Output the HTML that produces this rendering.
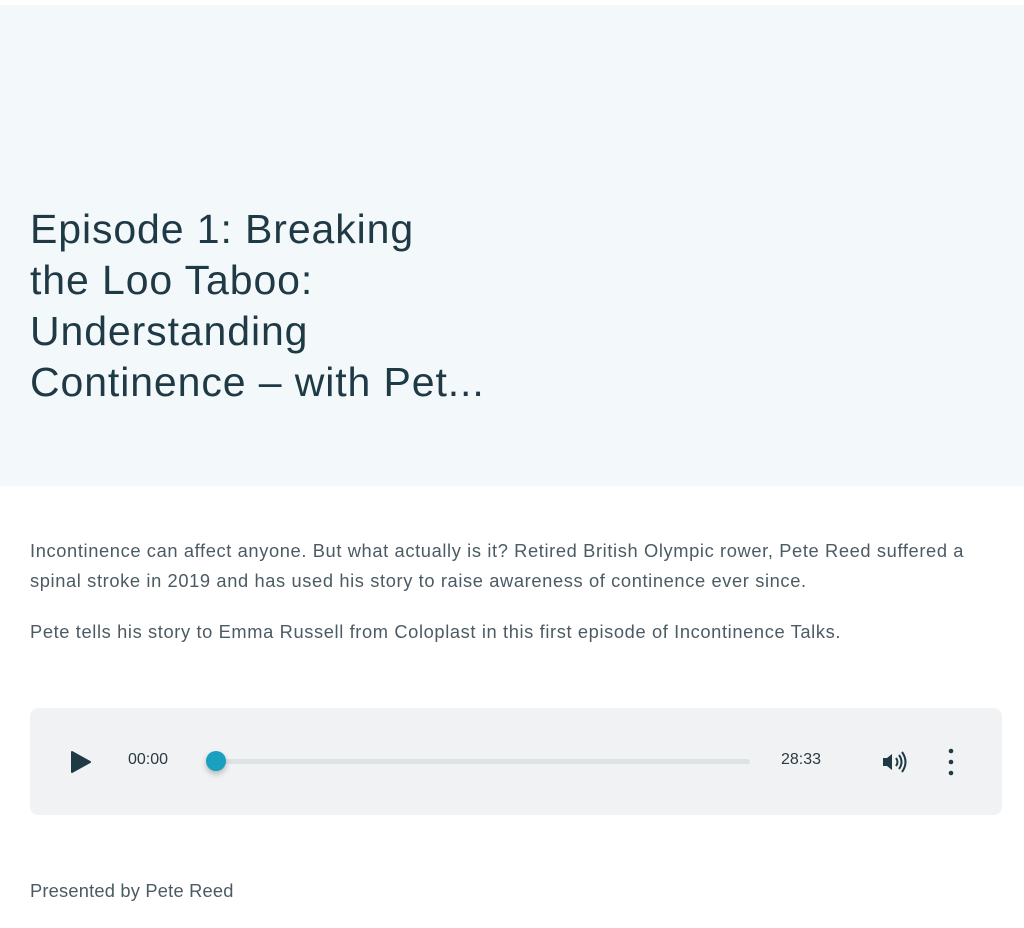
<!DOCTYPE html>
<html><head><meta charset="utf-8"><style>
body{margin:0;background:#fff;font-family:"Liberation Sans",sans-serif;width:1024px;height:928px;overflow:hidden;position:relative}
.hero{position:absolute;left:0;top:5px;width:1024px;height:481px;background:#f3f8fb}
h1{position:absolute;left:30px;top:204px;margin:0;font-weight:400;font-size:41px;line-height:51px;color:#1f3a45;letter-spacing:0.9px}
p{position:absolute;left:30px;margin:0;font-size:18.3px;line-height:30px;color:#4c5b63;letter-spacing:0.62px;white-space:nowrap}
.player{position:absolute;left:30px;top:708px;width:972px;height:107px;background:#f1f2f3;border-radius:8px}
.t{position:absolute;font-size:16px;color:#2a3a42;top:751px}
</style></head><body>
<div class="hero"></div>
<h1>Episode 1: Breaking<br>the Loo Taboo:<br>Understanding<br>Continence – with Pet...</h1>
<p style="top:536px">Incontinence can affect anyone. But what actually is it? Retired British Olympic rower, Pete Reed suffered a<br>spinal stroke in 2019 and has used his story to raise awareness of continence ever since.</p>
<p style="top:617px">Pete tells his story to Emma Russell from Coloplast in this first episode of Incontinence Talks.</p>
<div class="player"></div>
<svg style="position:absolute;left:70px;top:750px" width="22" height="24"><path d="M2 2 L20 12 L2 22 Z" fill="#1f3a45" stroke="#1f3a45" stroke-width="2" stroke-linejoin="round"/></svg>
<div class="t" style="left:128px">00:00</div>
<div style="position:absolute;left:216px;top:759px;width:534px;height:5px;background:#dde2e4;border-radius:3px"></div>
<div style="position:absolute;left:206px;top:751px;width:20px;height:20px;border-radius:50%;background:#1aa0bf;box-shadow:0 3px 6px rgba(0,0,0,.25)"></div>
<div class="t" style="left:781px">28:33</div>
<svg style="position:absolute;left:880px;top:749px" width="28" height="26"><path d="M3 9h4l5-4v16l-5-4H3z" fill="#1f3a45"/><path d="M16 9q3 4 0 8M19 6q5 7 0 14M22 3q7 10 0 20" fill="none" stroke="#1f3a45" stroke-width="2"/></svg>
<svg style="position:absolute;left:946px;top:748px" width="10" height="28"><circle cx="5" cy="3" r="2.3" fill="#1f3a45"/><circle cx="5" cy="14" r="2.3" fill="#1f3a45"/><circle cx="5" cy="25" r="2.3" fill="#1f3a45"/></svg>
<p style="top:876px;letter-spacing:0.2px">Presented by Pete Reed</p>
</body></html>
